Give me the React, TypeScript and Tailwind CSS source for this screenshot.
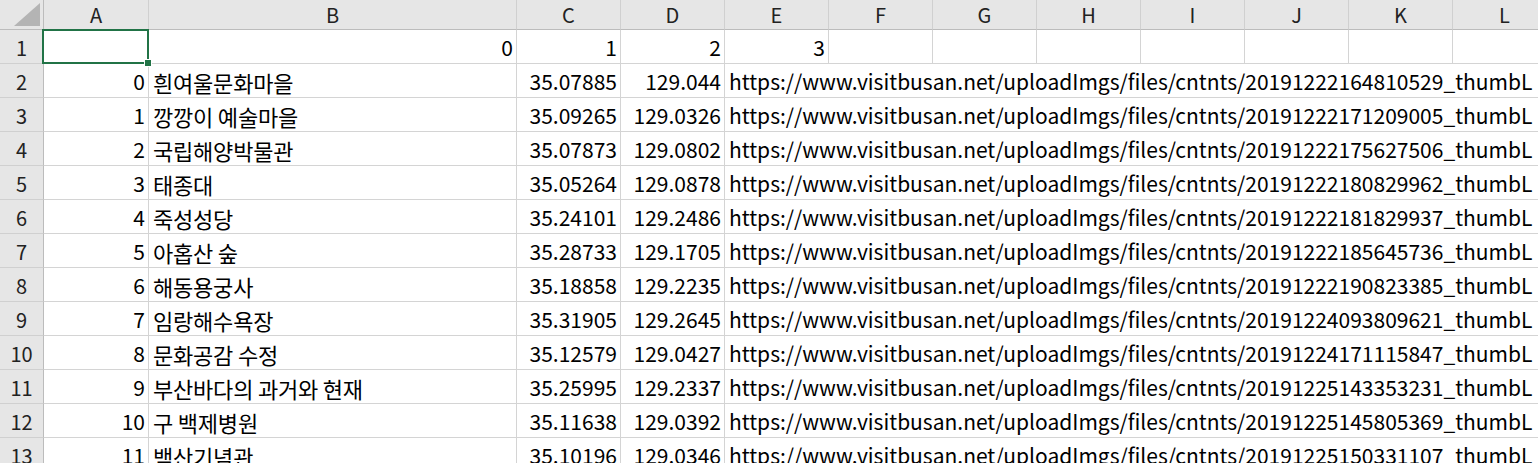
const COLS = ["A", "B", "C", "D", "E", "F", "G", "H", "I", "J", "K", "L"];

// widths include the 1px right border
const WIDTHS = [105, 368, 104, 104, 104, 104, 104, 104, 104, 104, 104, 104];

const ROWS: [string, string, string, string, string][] = [
  ["0", "흰여울문화마을", "35.07885", "129.044", "20191222164810529"],
  ["1", "깡깡이 예술마을", "35.09265", "129.0326", "20191222171209005"],
  ["2", "국립해양박물관", "35.07873", "129.0802", "20191222175627506"],
  ["3", "태종대", "35.05264", "129.0878", "20191222180829962"],
  ["4", "죽성성당", "35.24101", "129.2486", "20191222181829937"],
  ["5", "아홉산 숲", "35.28733", "129.1705", "20191222185645736"],
  ["6", "해동용궁사", "35.18858", "129.2235", "20191222190823385"],
  ["7", "임랑해수욕장", "35.31905", "129.2645", "20191224093809621"],
  ["8", "문화공감 수정", "35.12579", "129.0427", "20191224171115847"],
  ["9", "부산바다의 과거와 현재", "35.25995", "129.2337", "20191225143353231"],
  ["10", "구 백제병원", "35.11638", "129.0392", "20191225145805369"],
  ["11", "백산기념관", "35.10196", "129.0346", "20191225150331107"],
];

const FONT = { fontFamily: '"Noto Sans CJK KR", "Noto Sans", sans-serif' };

function RowHead({ n }: { n: number }) {
  return (
    <div className="w-[44px] h-[34px] shrink-0 bg-[#e6e6e6] border-r border-b border-r-[#bcbcbc] border-b-[#d0d0d0] flex items-center justify-center pt-[2px] text-[20px] text-[#222]">
      {n}
    </div>
  );
}

function Cell({
  w,
  children,
  align = "left",
  korean = false,
}: {
  w: number;
  children?: React.ReactNode;
  align?: "left" | "right";
  korean?: boolean;
}) {
  return (
    <div
      className={`h-[34px] shrink-0 border-r border-b border-[#d4d4d4] flex items-center pt-[2px] whitespace-nowrap overflow-hidden ${
        align === "right" ? "justify-end pr-[3px]" : "justify-start pl-[4px]"
      } ${korean ? "text-[22px] tracking-[-0.2px]" : "text-[21px]"}`}
      style={{ width: w }}
    >
      {children}
    </div>
  );
}

export default function App() {
  const rest = WIDTHS.slice(4).reduce((a, b) => a + b, 0);
  return (
    <div className="w-[1538px] h-[463px] overflow-hidden bg-white text-black leading-none" style={FONT}>
      {/* column header */}
      <div className="flex h-[30px]">
        <div className="w-[44px] h-[30px] shrink-0 bg-[#e6e6e6] border-r border-b border-[#bcbcbc] flex items-end justify-end pr-[3px] pb-[3px]">
          <svg width="26" height="23" viewBox="0 0 26 23">
            <polygon points="26,0 26,23 0,23" fill="#b4b4b4" />
          </svg>
        </div>
        {COLS.map((c, i) => (
          <div
            key={c}
            className="h-[30px] shrink-0 bg-[#e6e6e6] border-r border-b border-r-[#d0d0d0] border-b-[#bcbcbc] flex items-center justify-center text-[20px] text-[#222]"
            style={{ width: WIDTHS[i] }}
          >
            {c}
          </div>
        ))}
      </div>

      {/* row 1 */}
      <div className="flex relative">
        <RowHead n={1} />
        <Cell w={WIDTHS[0]} />
        <Cell w={WIDTHS[1]} align="right">0</Cell>
        <Cell w={WIDTHS[2]} align="right">1</Cell>
        <Cell w={WIDTHS[3]} align="right">2</Cell>
        <Cell w={WIDTHS[4]} align="right">3</Cell>
        {WIDTHS.slice(5).map((w, i) => (
          <Cell key={i} w={w} />
        ))}
        {/* selection */}
        <div className="absolute left-[42px] top-[-1px] w-[107px] h-[35px] border-[2px] border-[#217346] pointer-events-none" />
        <div className="absolute left-[144px] top-[29px] w-[6px] h-[6px] bg-[#217346] border border-white box-content" />
      </div>

      {ROWS.map((r, i) => (
        <div key={i} className="flex">
          <RowHead n={i + 2} />
          <Cell w={WIDTHS[0]} align="right">{r[0]}</Cell>
          <Cell w={WIDTHS[1]} korean>{r[1]}</Cell>
          <Cell w={WIDTHS[2]} align="right">{r[2]}</Cell>
          <Cell w={WIDTHS[3]} align="right">{r[3]}</Cell>
          <Cell w={rest}>
            https://www.visitbusan.net/uploadImgs/files/cntnts/{r[4]}_thumbL
          </Cell>
        </div>
      ))}
    </div>
  );
}
